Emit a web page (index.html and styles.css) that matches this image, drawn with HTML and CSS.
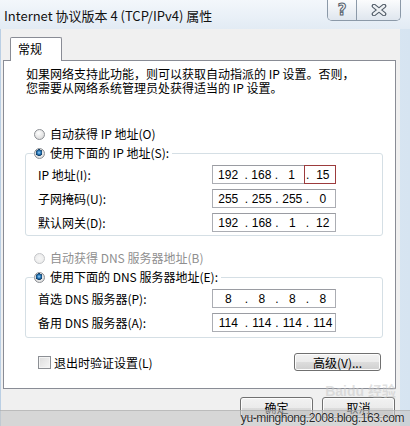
FILE: index.html
```html
<!DOCTYPE html>
<html lang="zh-cn">

<head>
  <meta charset="UTF-8" />
  <title>Internet 协议版本 4 (TCP/IPv4) 属性</title>
  <link rel="stylesheet" href="styles.css">
</head>

<body>

  <!-- BARRA DE TITULO -->
  <div class="titlebar">
    <span class="title">Internet 协议版本 4 (TCP/IPv4) 属性</span>
    <div class="caption">
      <span class="cbtn help">?</span>
      <span class="cbtn close">
        <svg width="16" height="12" viewBox="0 0 16 12">
          <path d="M3 2 L13 10 M13 2 L3 10" stroke="#4f5a66" stroke-width="4.6" stroke-linecap="round" fill="none" />
          <path d="M3 2 L13 10 M13 2 L3 10" stroke="#eef1f4" stroke-width="2.4" stroke-linecap="round" fill="none" />
        </svg>
      </span>
    </div>
  </div>

  <div class="client">
    <div class="tabs">
      <div class="tab">常规</div>
    </div>

    <div class="panel">
      <p class="desc">如果网络支持此功能，则可以获取自动指派的 IP 设置。否则，<br>您需要从网络系统管理员处获得适当的 IP 设置。</p>

      <div class="radio-line first">
        <span class="radio"></span>自动获得 IP 地址(O)
      </div>

      <fieldset class="group">
        <legend class="radio-line"><span class="radio checked"></span>使用下面的 IP 地址(S):</legend>
        <div class="row">
          <span class="lbl">IP 地址(I):</span>
          <div class="ip">
            <span class="seg"><i>192</i></span>
            <span class="seg"><b>.</b><i>168</i></span>
            <span class="seg"><b>.</b><i>1</i></span>
            <span class="seg focus"><b>.</b><i>15</i></span>
          </div>
        </div>
        <div class="row">
          <span class="lbl">子网掩码(U):</span>
          <div class="ip">
            <span class="seg"><i>255</i></span>
            <span class="seg"><b>.</b><i>255</i></span>
            <span class="seg"><b>.</b><i>255</i></span>
            <span class="seg"><b>.</b><i>0</i></span>
          </div>
        </div>
        <div class="row">
          <span class="lbl">默认网关(D):</span>
          <div class="ip">
            <span class="seg"><i>192</i></span>
            <span class="seg"><b>.</b><i>168</i></span>
            <span class="seg"><b>.</b><i>1</i></span>
            <span class="seg"><b>.</b><i>12</i></span>
          </div>
        </div>
      </fieldset>

      <div class="radio-line disabled">
        <span class="radio"></span>自动获得 DNS 服务器地址(B)
      </div>

      <fieldset class="group dns">
        <legend class="radio-line"><span class="radio checked"></span>使用下面的 DNS 服务器地址(E):</legend>
        <div class="row">
          <span class="lbl">首选 DNS 服务器(P):</span>
          <div class="ip">
            <span class="seg"><i>8</i></span>
            <span class="seg"><b>.</b><i>8</i></span>
            <span class="seg"><b>.</b><i>8</i></span>
            <span class="seg"><b>.</b><i>8</i></span>
          </div>
        </div>
        <div class="row">
          <span class="lbl">备用 DNS 服务器(A):</span>
          <div class="ip">
            <span class="seg"><i>114</i></span>
            <span class="seg"><b>.</b><i>114</i></span>
            <span class="seg"><b>.</b><i>114</i></span>
            <span class="seg"><b>.</b><i>114</i></span>
          </div>
        </div>
      </fieldset>

      <div class="bottom-row">
        <label class="check"><span class="box"></span>退出时验证设置(L)</label>
        <button class="btn adv">高级(V)...</button>
      </div>
    </div>

    <div class="footer">
      <button class="btn">确定</button>
      <button class="btn">取消</button>
    </div>
  </div>

  <!-- marcas d'agua -->
  <div class="baidu">Baidu 经验</div>
  <div class="watermark">yu-minghong.2008.blog.163.com</div>

</body>

</html>
```

FILE: styles.css
```css
body {
  margin: 0;
  width: 410px;
  height: 426px;
  overflow: hidden;
  position: relative;
  background: linear-gradient(90deg, #b8cde3 0, #c9d9ea 3px, #e4edf6 60%, #d6e4f1 100%);
  font-family: "Noto Sans CJK SC", "Liberation Sans", sans-serif;
  font-size: 12px;
  color: #000;
}

.titlebar {
  height: 29px;
  display: flex;
  align-items: flex-start;
  background: linear-gradient(#f3f7fb, #e2ebf4);
}

.title {
  font-size: 13px;
  line-height: 18px;
  padding: 7px 0 0 4px;
  color: #111;
}

.caption {
  margin-left: auto;
  margin-right: 9px;
  display: flex;
  height: 20px;
  border: 1px solid #8b99a8;
  border-top: none;
  border-radius: 0 0 5px 5px;
  overflow: hidden;
}

.cbtn {
  display: flex;
  align-items: center;
  justify-content: center;
  background: linear-gradient(#fbfcfd, #dfe6ee);
}

.cbtn.help {
  width: 28px;
  font: bold 15px "DejaVu Sans", sans-serif;
  color: #f6f8fa;
  -webkit-text-stroke: 1px #56616d;
}

.cbtn.close {
  width: 43px;
  border-left: 1px solid #8b99a8;
}

.client {
  width: 399px;
  height: 397px;
  margin-left: 1px;
  background: #f0f0f0;
}

.tabs {
  display: flex;
  padding: 8px 0 0 9px;
}

.tab {
  position: relative;
  z-index: 1;
  box-sizing: border-box;
  width: 52px;
  height: 24px;
  margin-bottom: -1px;
  padding-left: 7px;
  line-height: 21px;
  background: #fff;
  border: 1px solid #898c95;
  border-bottom: none;
  border-radius: 2px 2px 0 0;
}

.panel {
  box-sizing: border-box;
  width: 393px;
  height: 329px;
  margin-left: 2px;
  background: #fff;
  border: 1px solid #898c95;
}

.desc {
  margin: 6px 0 0 22px;
  line-height: 14px;
}

.radio-line {
  display: flex;
  align-items: center;
  gap: 5px;
  height: 14px;
  line-height: 14px;
}

.radio-line.first {
  margin: 32px 0 0 30px;
}

.radio-line.disabled {
  margin: 15px 0 0 30px;
  color: #8f8f8f;
}

.radio {
  box-sizing: border-box;
  width: 11px;
  height: 11px;
  border-radius: 50%;
  border: 1px solid #8c8f94;
  background: radial-gradient(circle at 40% 35%, #ffffff, #e3e3e3 60%, #cfcfcf);
}

.radio.checked {
  background:
    radial-gradient(circle at 45% 40%, #9fd3fa 0, #2d7fc0 1.6px, #0d3a64 3.2px, transparent 3.4px),
    radial-gradient(circle, #f4f4f4, #d8d8d8);
}

.disabled .radio {
  border-color: #c3c5c8;
  background: radial-gradient(circle, #f7f7f7, #e8e8e8);
}

.group {
  margin: 5px 12px 0 21px;
  padding: 0 0 3px 0;
  border: 1px solid #d5dfe5;
  border-radius: 3px;
}

.group.dns {
  margin-top: 5px;
  padding-bottom: 5px;
}

.group legend {
  margin-left: 8px;
  padding: 0 3px 0 0;
}

.row {
  display: flex;
  align-items: center;
  height: 19px;
  margin-top: 5px;
  padding-left: 12px;
}

.lbl {
  width: 174px;
}

.ip {
  box-sizing: border-box;
  display: flex;
  width: 124px;
  height: 19px;
  border: 1px solid #abadb3;
  border-top-color: #9a9ca2;
  font-family: "Liberation Sans", sans-serif;
  font-size: 12px;
}

.seg {
  flex: 1;
  display: flex;
  align-items: center;
  box-sizing: border-box;
}

.seg b {
  width: 6px;
  font-weight: normal;
  text-align: center;
}

.seg i {
  flex: 1;
  font-style: normal;
  text-align: center;
}

.seg.focus {
  margin: -1px -1px -1px 0;
  border: 1px solid #9c3b3d;
}

.bottom-row {
  display: flex;
  align-items: center;
  justify-content: space-between;
  height: 18px;
  margin: 15px 14px 0 34px;
}

.check {
  display: flex;
  align-items: center;
  gap: 3px;
}

.box {
  box-sizing: border-box;
  width: 13px;
  height: 13px;
  border: 1px solid #8c8f94;
  background: linear-gradient(135deg, #dcdcdc, #f6f6f6);
  box-shadow: inset 0 0 0 1px #f4f4f4;
}

.btn {
  box-sizing: border-box;
  height: 21px;
  padding: 0;
  font-family: "Noto Sans CJK SC", sans-serif;
  font-size: 12px;
  color: #000;
  border: 1px solid #707070;
  border-radius: 3px;
  background: linear-gradient(#f2f2f2, #ebebeb 50%, #dddddd 50%, #cfcfcf);
  box-shadow: inset 0 0 0 1px #fcfcfc;
}

.btn.adv {
  width: 87px;
  height: 18px;
}

.footer {
  display: flex;
  justify-content: flex-end;
  gap: 9px;
  padding: 8px 5px 0 0;
}

.footer .btn {
  width: 73px;
}

.baidu {
  position: absolute;
  right: 14px;
  top: 384px;
  font: bold 14px/14px "Liberation Sans", "Noto Sans CJK SC", sans-serif;
  color: rgba(200, 200, 200, 0.55);
}

.watermark {
  position: absolute;
  left: 0;
  right: 0;
  bottom: 0;
  height: 15px;
  padding-right: 6px;
  background: rgba(196, 196, 196, 0.6);
  border-top: 1px solid rgba(160, 160, 160, 0.5);
  text-align: right;
  font-family: "Liberation Sans", sans-serif;
  font-size: 12px;
  line-height: 15px;
  letter-spacing: -0.4px;
  color: #2a2a2a;
  text-shadow: 0 0 1px #fff;
}
```
